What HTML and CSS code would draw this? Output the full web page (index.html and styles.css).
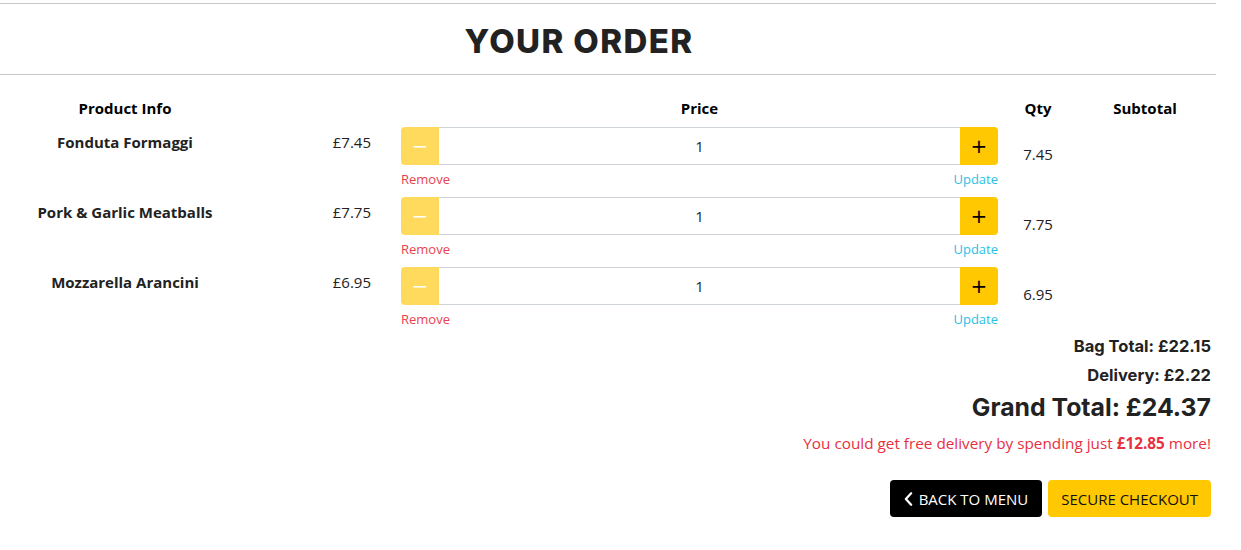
FILE: index.html
```html
<!DOCTYPE html>
<html lang="en">
<head>
<meta charset="utf-8">
<title>Your Order</title>
<link rel="stylesheet" href="styles.css">
</head>
<body>
<div class="page">
  <header class="order-head">
    <h1 class="order-title">YOUR ORDER</h1>
  </header>

  <div class="bag">
    <div class="bag-row bag-headrow">
      <div class="th c-name">Product Info</div>
      <div class="th c-price"></div>
      <div class="th c-qty">Price</div>
      <div class="th c-sub">Qty</div>
      <div class="th c-extra">Subtotal</div>
    </div>

    <div class="bag-row">
      <div class="td c-name name">Fonduta Formaggi</div>
      <div class="td c-price">£7.45</div>
      <div class="td c-qty">
        <div class="qty-group">
          <button class="qbtn qminus" type="button">&minus;</button>
          <input class="qinput" type="text" value="1">
          <button class="qbtn qplus" type="button">+</button>
        </div>
        <div class="qlinks"><a class="remove">Remove</a><a class="update">Update</a></div>
      </div>
      <div class="td c-sub sub">7.45</div>
      <div class="td c-extra"></div>
    </div>

    <div class="bag-row">
      <div class="td c-name name">Pork &amp; Garlic Meatballs</div>
      <div class="td c-price">£7.75</div>
      <div class="td c-qty">
        <div class="qty-group">
          <button class="qbtn qminus" type="button">&minus;</button>
          <input class="qinput" type="text" value="1">
          <button class="qbtn qplus" type="button">+</button>
        </div>
        <div class="qlinks"><a class="remove">Remove</a><a class="update">Update</a></div>
      </div>
      <div class="td c-sub sub">7.75</div>
      <div class="td c-extra"></div>
    </div>

    <div class="bag-row">
      <div class="td c-name name">Mozzarella Arancini</div>
      <div class="td c-price">£6.95</div>
      <div class="td c-qty">
        <div class="qty-group">
          <button class="qbtn qminus" type="button">&minus;</button>
          <input class="qinput" type="text" value="1">
          <button class="qbtn qplus" type="button">+</button>
        </div>
        <div class="qlinks"><a class="remove">Remove</a><a class="update">Update</a></div>
      </div>
      <div class="td c-sub sub">6.95</div>
      <div class="td c-extra"></div>
    </div>
  </div>

  <div class="totals">
    <p class="t-bag">Bag Total: £22.15</p>
    <p class="t-del">Delivery: £2.22</p>
    <p class="t-grand">Grand Total: £24.37</p>
    <p class="t-free">You could get free delivery by spending just <strong>£12.85</strong> more!</p>
    <div class="actions">
      <a class="btn btn-back">
        <svg class="chev" viewBox="0 0 10 16" width="9" height="14" aria-hidden="true"><path d="M8 1.5 L2 8 L8 14.5" fill="none" stroke="#fff" stroke-width="2.6" stroke-linecap="round" stroke-linejoin="round"/></svg>
        BACK TO MENU
      </a>
      <a class="btn btn-checkout">SECURE CHECKOUT</a>
    </div>
  </div>
</div>
</body>
</html>
```

FILE: styles.css
```css
* { box-sizing: border-box; }

body {
  margin: 0;
  font-family: "Open Sans", "Noto Sans", sans-serif;
  color: #212529;
  background: #fff;
}

.page {
  width: 1216px;
  padding-top: 3px;
}

.order-head {
  border-top: 1px solid #c8c8c8;
  border-bottom: 1px solid #c8c8c8;
  height: 72px;
  display: flex;
  align-items: center;
  justify-content: center;
  padding-top: 3px;
}

.order-title {
  margin: 0;
  font-family: "Inter", "DejaVu Sans", sans-serif;
  font-weight: 800;
  font-size: 33px;
  letter-spacing: 1.4px;
  color: #222;
  transform: translateX(-29px);
}

.bag {
  padding-top: 23px;
}

.bag-row {
  display: grid;
  grid-template-columns: 250px 133px 627px 56px 158px;
  align-items: start;
  height: 70px;
}

.bag-row:last-child {
  height: 65px;
}

.bag-headrow {
  height: 29px;
}

.th {
  font-size: 15px;
  font-weight: 700;
  color: #000;
  text-align: center;
  line-height: 20px;
}

.th.c-qty {
  padding: 0 12px 0 18px;
}

.td {
  font-size: 15px;
  line-height: 20px;
  padding-top: 5px;
}

.name {
  font-weight: 700;
  text-align: center;
  color: #222;
}

.c-price.td {
  text-align: right;
  padding-right: 12px;
  color: #222;
}

.c-qty.td {
  padding: 0 12px 0 18px;
}

.sub {
  padding-top: 17px;
  text-align: center;
  color: #222;
}

.qty-group {
  display: flex;
  height: 38px;
}

.qbtn {
  width: 38px;
  height: 38px;
  border: none;
  border-radius: 4px;
  font-family: "DejaVu Sans", sans-serif;
  font-size: 20px;
  line-height: 38px;
  padding: 0;
  cursor: pointer;
}

.qminus {
  background: #ffda5c;
  color: #fff;
  border-top-right-radius: 0;
  border-bottom-right-radius: 0;
}

.qplus {
  background: #ffc800;
  color: #000;
  border-top-left-radius: 0;
  border-bottom-left-radius: 0;
}

.qinput {
  flex: 1;
  min-width: 0;
  height: 38px;
  border: 1px solid #ced4da;
  border-left: none;
  border-right: none;
  text-align: center;
  font-family: "Open Sans", sans-serif;
  font-size: 15px;
  color: #212529;
}

.qlinks {
  display: flex;
  justify-content: space-between;
  font-size: 13px;
  line-height: 18px;
  margin-top: 5px;
}

.remove { color: #e8424f; }
.update { color: #2cc0e8; }

.totals {
  padding-right: 5px;
  text-align: right;
}

.totals p { margin: 0; }

.t-bag, .t-del {
  font-family: "Inter", "DejaVu Sans", sans-serif;
  font-weight: 700;
  font-size: 16.5px;
  line-height: 29px;
  color: #222;
}

.t-grand {
  font-family: "Inter", "DejaVu Sans", sans-serif;
  font-weight: 700;
  font-size: 24.8px;
  line-height: 34px;
  color: #222;
}

.t-free {
  font-size: 15.3px;
  line-height: 20px;
  color: #e8303f;
  margin-top: 9px !important;
}

.t-free strong { font-weight: 700; }

.actions {
  display: flex;
  justify-content: flex-end;
  gap: 6px;
  margin-top: 27px;
}

.btn {
  display: inline-flex;
  align-items: center;
  gap: 6px;
  height: 37px;
  padding: 0 13px;
  border-radius: 4px;
  font-size: 15px;
  text-decoration: none;
}

.btn-back {
  background: #000;
  color: #fff;
  padding-left: 14px;
  padding-right: 14px;
}

.btn-checkout {
  background: #ffc800;
  color: #111;
}
```
